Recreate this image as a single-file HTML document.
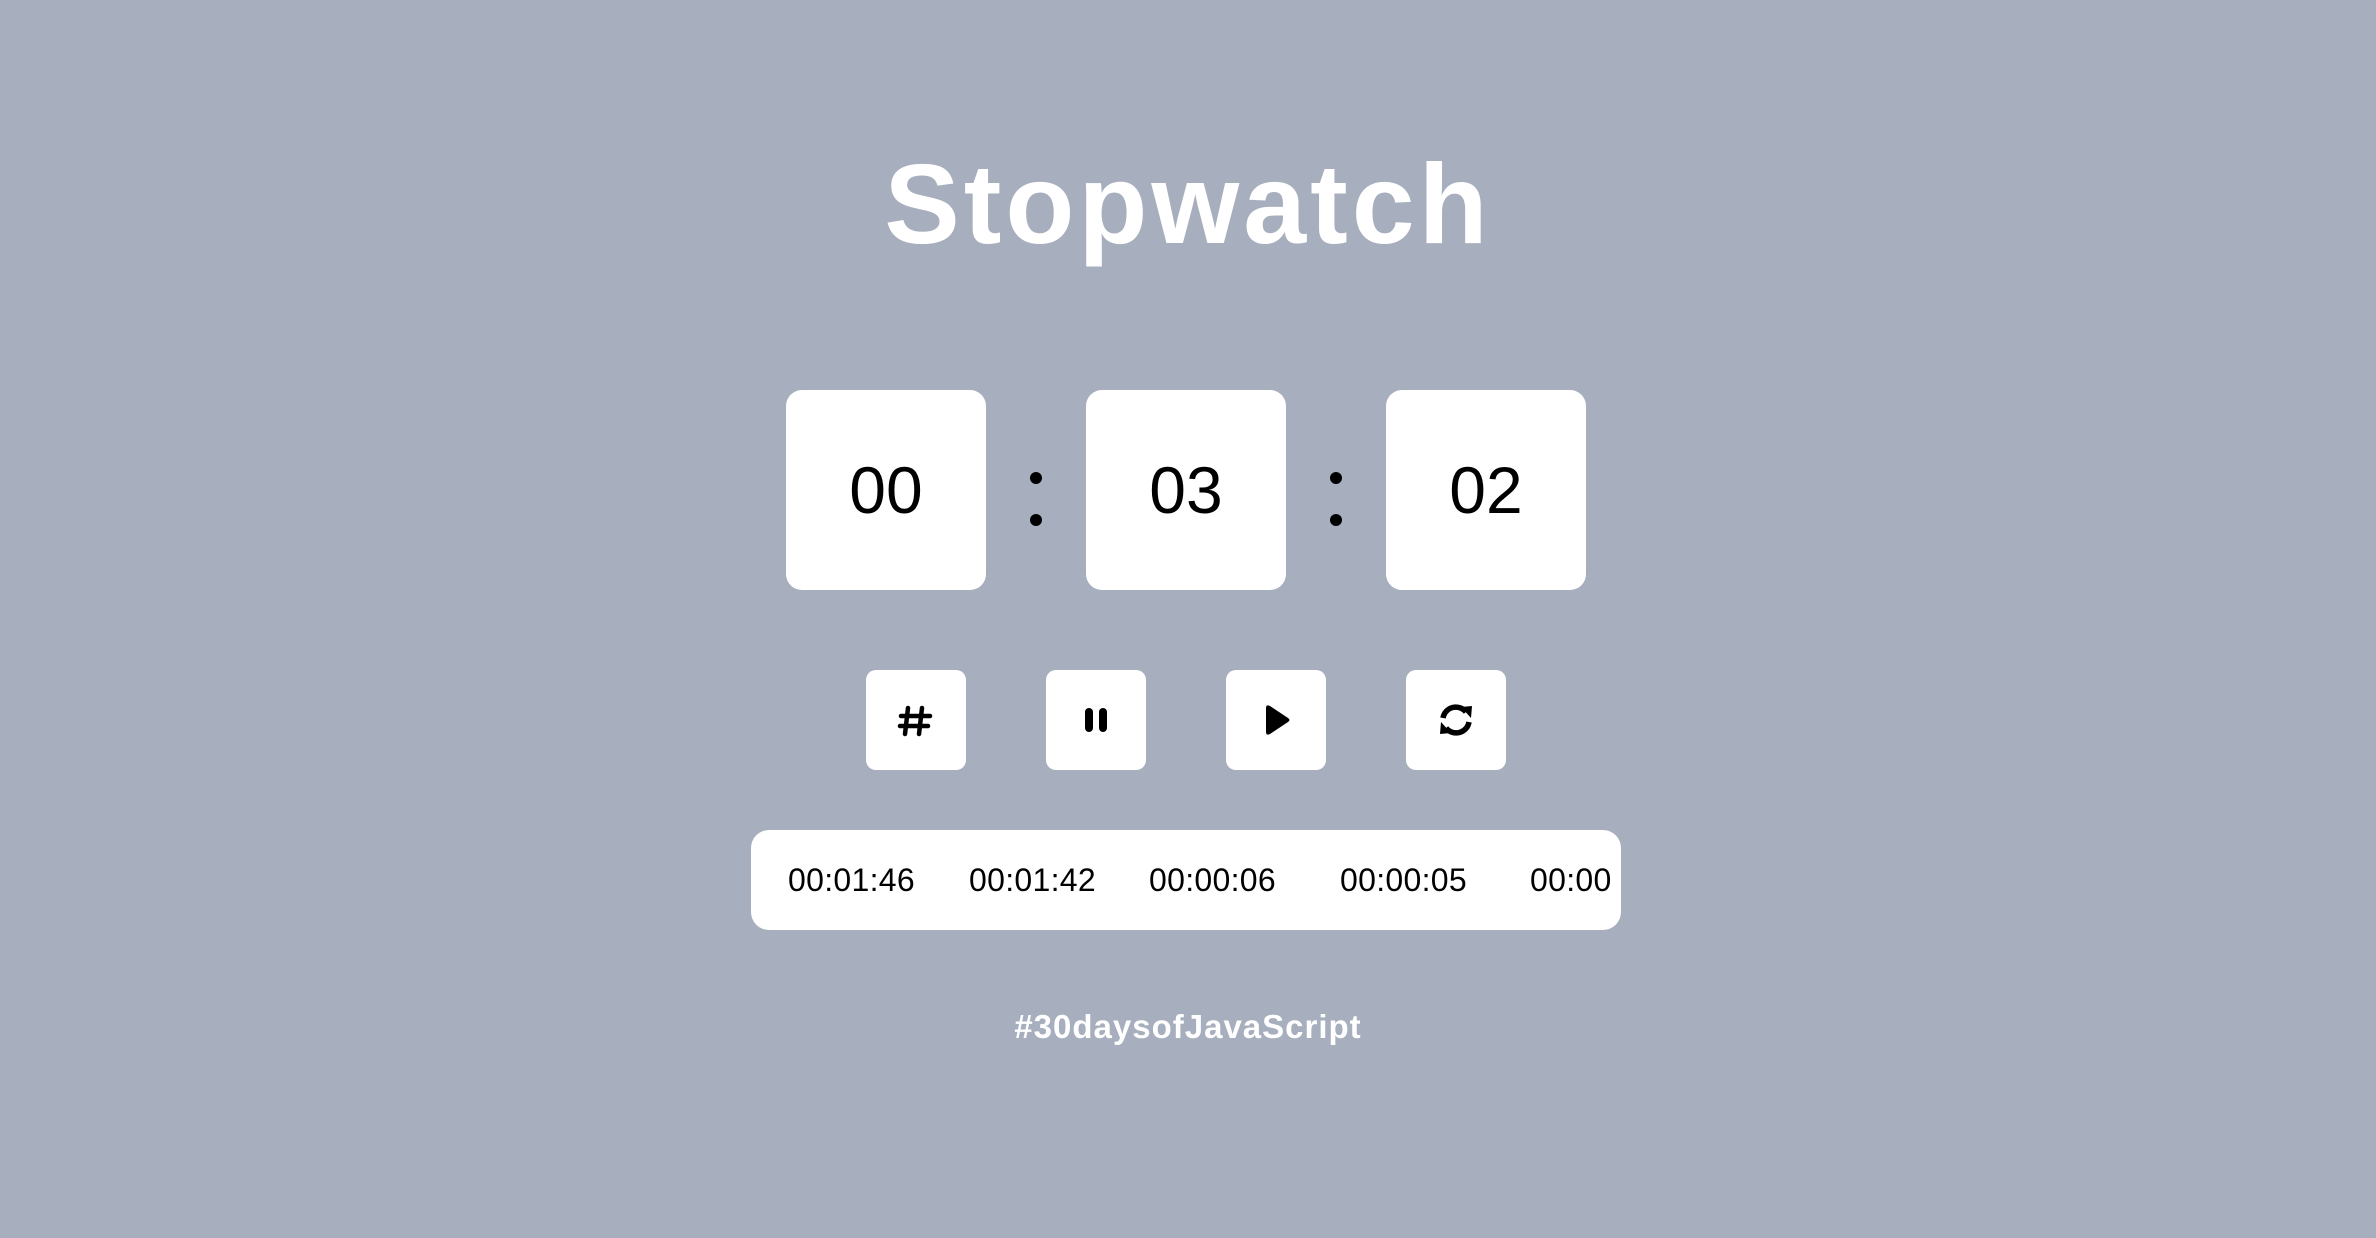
<!DOCTYPE html>
<html><head><meta charset="utf-8"><style>
html,body{margin:0;padding:0;}
body{width:2376px;height:1238px;background:#a7aebd;position:relative;overflow:hidden;font-family:"Liberation Sans",sans-serif;}
.t{position:absolute;left:0;width:2376px;text-align:center;top:139px;font-size:113px;font-weight:bold;color:#fff;letter-spacing:4px;line-height:130px;}
.box{position:absolute;top:390px;width:200px;height:200px;background:#fff;border-radius:16px;text-align:center;line-height:200px;font-size:66px;color:#000;}
.col{position:absolute;width:12px;height:12px;border-radius:50%;background:#000;}
.btn{position:absolute;top:670px;width:100px;height:100px;background:#fff;border-radius:10px;}
.btn svg{position:absolute;left:0;top:0;}
.laps{position:absolute;left:751px;top:830px;width:870px;height:100px;background:#fff;border-radius:18px;overflow:hidden;}
.laps span{position:absolute;top:0;line-height:100px;font-size:32px;color:#000;white-space:nowrap;letter-spacing:0.3px;}
.f{position:absolute;left:0;width:2376px;text-align:center;top:1008px;font-size:33px;font-weight:bold;color:#fff;letter-spacing:1px;}
</style></head><body>
<div class="t">Stopwatch</div>
<div class="box" style="left:786px">00</div>
<div class="box" style="left:1086px">03</div>
<div class="box" style="left:1386px">02</div>
<div class="col" style="left:1030px;top:472px"></div><div class="col" style="left:1030px;top:514px"></div>
<div class="col" style="left:1330px;top:472px"></div><div class="col" style="left:1330px;top:514px"></div>
<div class="btn" style="left:866px"><svg width="100" height="100"><g stroke="#000" stroke-width="4.5" stroke-linecap="round"><line x1="42" y1="38" x2="39" y2="64"/><line x1="56" y1="38" x2="53" y2="64"/><line x1="35" y1="46" x2="64" y2="46"/><line x1="34" y1="56" x2="62" y2="56"/></g></svg></div>
<div class="btn" style="left:1046px"><svg width="100" height="100"><rect x="39" y="38" width="8" height="24" rx="4" fill="#000"/><rect x="53" y="38" width="8" height="24" rx="4" fill="#000"/></svg></div>
<div class="btn" style="left:1226px"><svg width="100" height="100"><path d="M40 38 Q40 34 44 36 L62 48 Q65 50 62 52 L44 64 Q40 66 40 62 Z" fill="#000"/></svg></div>
<div class="btn" style="left:1406px"><svg width="100" height="100"><g fill="none" stroke="#000" stroke-width="5.5"><path d="M37 48 A13 13 0 0 1 60 42"/><path d="M63 52 A13 13 0 0 1 40 58"/></g><path d="M55 37 L66 36 L65 48 Z" fill="#000"/><path d="M45 63 L34 64 L35 52 Z" fill="#000"/></svg></div>
<div class="laps"><span style="left:37px">00:01:46</span><span style="left:218px">00:01:42</span><span style="left:398px">00:00:06</span><span style="left:589px">00:00:05</span><span style="left:779px">00:00</span></div>
<div class="f">#30daysofJavaScript</div>
</body></html>
